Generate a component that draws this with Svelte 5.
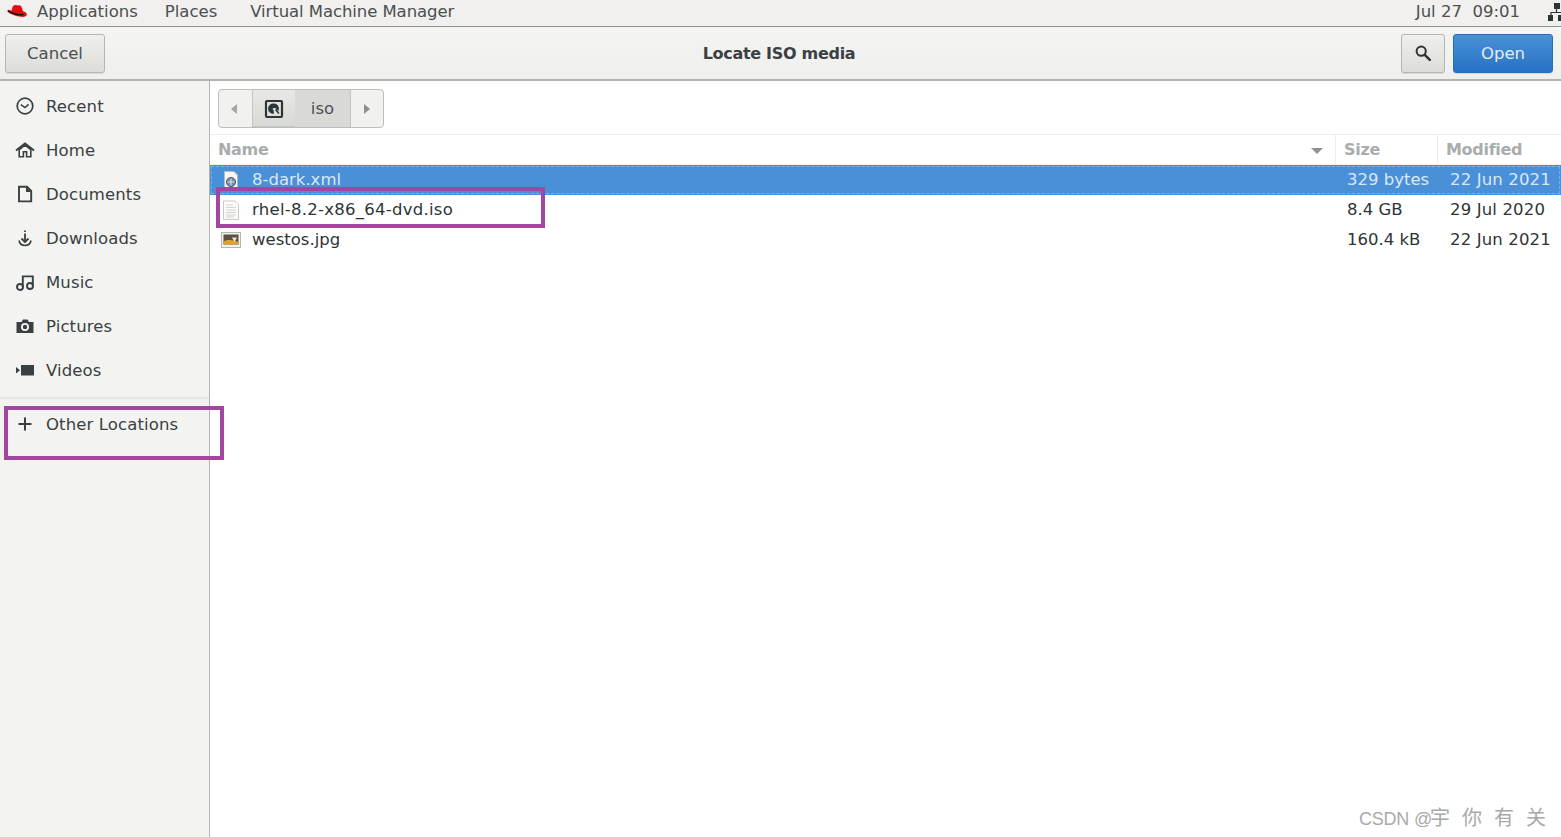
<script lang="ts">
  const places = [
    { name: "Recent", icon: "recent" },
    { name: "Home", icon: "home" },
    { name: "Documents", icon: "doc" },
    { name: "Downloads", icon: "down" },
    { name: "Music", icon: "music" },
    { name: "Pictures", icon: "camera" },
    { name: "Videos", icon: "video" },
  ];

  const files = [
    { name: "8-dark.xml", size: "329 bytes", date: "22 Jun 2021", icon: "xml", selected: true },
    { name: "rhel-8.2-x86_64-dvd.iso", size: "8.4 GB", date: "29 Jul 2020", icon: "text", selected: false },
    { name: "westos.jpg", size: "160.4 kB", date: "22 Jun 2021", icon: "image", selected: false },
  ];
</script>

<div class="screen">
  <div class="topbar">
    <svg class="hat" width="22" height="16" viewBox="1 1 20 14.5">
      <path d="M7 3.5C8 1.5 10.5 1.5 12 2.3 13.5 1.7 15 2.3 15.5 4.5L16.5 7.5C18.5 8 20 9 20 10.6 20 12.2 17.5 13 14.5 12.6 10.5 12.2 5 10 3 8.4 1.8 7.4 2 6.4 3.3 6.3L6 7Z" fill="#e01010" />
      <path d="M3 7.2C6 9.4 12 11 17 10.6" fill="none" stroke="#1a1010" stroke-width="1.4" />
    </svg>
    <span class="menu first">Applications</span>
    <span class="menu places">Places</span>
    <span class="menu vmm">Virtual Machine Manager</span>
    <span class="clock">Jul 27&nbsp; 09:01</span>
    <svg class="net" width="14" height="20" viewBox="0 0 14 20">
      <path d="M7 2h6v6H7zM1 14h5v6H1zM11 14h3v6h-3z" fill="#2e3436" />
      <path d="M9.5 8v3M4 14v-2.5h10" fill="none" stroke="#2e3436" stroke-width="1.2" />
    </svg>
  </div>

  <div class="header">
    <button class="btn cancel">Cancel</button>
    <div class="title">Locate ISO media</div>
    <button class="btn search" aria-label="Search">
      <svg width="18" height="18" viewBox="0 0 18 18">
        <circle cx="7.2" cy="7.2" r="4.6" fill="none" stroke="#2e3436" stroke-width="2" />
        <path d="M10.8 10.8l5 5" stroke="#2e3436" stroke-width="2.6" stroke-linecap="round" />
      </svg>
    </button>
    <button class="btn open">Open</button>
  </div>

  <div class="body">
    <aside class="sidebar">
      {#each places as p}
        <div class="place">
          <svg class="ico" width="20" height="20" viewBox="0 0 20 20">
            {#if p.icon === "recent"}
              <circle cx="10" cy="10" r="7.8" fill="none" stroke="#3a3f41" stroke-width="1.7" />
              <path d="M5.8 8.6l4.2 3 3.6-3.2" fill="none" stroke="#3a3f41" stroke-width="1.5" />
            {:else if p.icon === "home"}
              <path d="M1 10.5L10 3.4 19 10.5" fill="none" stroke="#3a3f41" stroke-width="2" />
              <path d="M4.2 9.5V16.8H8.4V11.8H11.6V16.8H15.8V9.5L10 5.2Z" fill="none" stroke="#3a3f41" stroke-width="1.6" />
            {:else if p.icon === "doc"}
              <path d="M4 2.8H12L16.2 7V17.4H4Z" fill="none" stroke="#3a3f41" stroke-width="1.9" />
              <path d="M11 2.8V8H16.2" fill="#3a3f41" />
            {:else if p.icon === "down"}
              <path d="M10 2.5V4M10 5.5V13" stroke="#3a3f41" stroke-width="1.8" fill="none" />
              <path d="M6.5 10.5L10 14 13.5 10.5" stroke="#3a3f41" stroke-width="1.8" fill="none" />
              <path d="M4 12.5C4.5 15.5 7 17.5 10 17.5S15.5 15.5 16 12.5" stroke="#3a3f41" stroke-width="1.6" fill="none" />
            {:else if p.icon === "music"}
              <circle cx="5" cy="15" r="3" fill="none" stroke="#3a3f41" stroke-width="1.9" />
              <circle cx="15" cy="14" r="3" fill="none" stroke="#3a3f41" stroke-width="1.9" />
              <path d="M7.8 15V4.4H17.8V14" fill="none" stroke="#3a3f41" stroke-width="1.9" />
            {:else if p.icon === "camera"}
              <path d="M1.5 6H6.5L8 3.6H12.5L14 6H18.5V17H1.5Z" fill="#3a3f41" />
              <circle cx="10" cy="11" r="4" fill="#f3f3f1" />
              <circle cx="10" cy="11" r="2.2" fill="#3a3f41" />
            {:else}
              <path d="M6 5H19V15.5H6Z" fill="#3a3f41" />
              <path d="M1 7L5 10.2 1 13.5Z" fill="#3a3f41" />
            {/if}
          </svg>
          <span>{p.name}</span>
        </div>
      {/each}
      <div class="sep"></div>
      <div class="place other">
        <svg class="ico" width="20" height="20" viewBox="0 0 20 20">
          <path d="M10 3.5V16.5M3.5 10H16.5" stroke="#3a3f41" stroke-width="2" fill="none" />
        </svg>
        <span>Other Locations</span>
      </div>
    </aside>

    <main class="content">
      <div class="pathwrap">
        <div class="pathbar">
          <div class="seg arrow back">
            <svg width="8" height="12" viewBox="0 0 8 12"><path d="M7 1V11L1 6Z" fill="#a3a7a8" /></svg>
          </div>
          <div class="seg disk">
            <svg width="20" height="20" viewBox="0 0 20 20">
              <rect x="2" y="2" width="16" height="16" rx="1" fill="none" stroke="#2e3436" stroke-width="2.2" />
              <path d="M10 4.5A5.2 5.2 0 1 0 10 14.8L9.6 11.3 8.3 9.8 11 8.8 14.2 12.3A5.2 5.2 0 0 0 10 4.5Z" fill="#2e3436" />
              <path d="M11.5 10.5l3.4 4" stroke="#2e3436" stroke-width="1.6" />
            </svg>
          </div>
          <div class="seg iso">iso</div>
          <div class="seg arrow forward">
            <svg width="8" height="12" viewBox="0 0 8 12"><path d="M1 1V11L7 6Z" fill="#8d9192" /></svg>
          </div>
        </div>
      </div>

      <div class="table-head">
        <div class="th name">Name
          <svg class="sort" width="12" height="6" viewBox="0 0 12 6"><path d="M0 0H12L6 6Z" fill="#8f9394" /></svg>
        </div>
        <div class="th size">Size</div>
        <div class="th modified">Modified</div>
      </div>

      {#each files as f}
        <div class="row" class:selected={f.selected}>
          <div class="cell name">
            <svg class="fileicon" width="20" height="20" viewBox="0 0 20 20">
              {#if f.icon === "xml"}
                <path d="M3.5 1.5H13L16.5 5V18.5H3.5Z" fill="#f4f5f5" stroke="#b9bcbc" />
                <circle cx="10" cy="12" r="4.6" fill="#6f8daa" stroke="#445" stroke-width="0.8" />
                <path d="M6.5 12H13.5M10 8.5V15.5" stroke="#dfe6ec" stroke-width="1" />
              {:else if f.icon === "text"}
                <path d="M2.5 1H14L17.5 4.5V19.5H2.5Z" fill="#fbfbfa" stroke="#c9c9c6" />
                <path d="M5 5H12M5 7.5H15M5 10H15M5 12.5H15M5 15H15M5 17H13" stroke="#d2d2cf" stroke-width="1" />
              {:else}
                <rect x="0.5" y="2.5" width="19" height="15" fill="#f1f1ef" stroke="#b5b5b2" />
                <rect x="2.5" y="4.5" width="15" height="10" fill="#5c5142" />
                <path d="M2.5 11.5C7 9 12 10 17.5 12V14.5H2.5Z" fill="#e0a32e" />
                <path d="M11 7.5L16 7.5 13.5 12Z" fill="#eee4cd" />
              {/if}
            </svg>
            <span class:long={f.icon === "text"}>{f.name}</span>
          </div>
          <div class="cell size">{f.size}</div>
          <div class="cell modified">{f.date}</div>
        </div>
      {/each}
    </main>
  </div>

  <div class="mark mark-file"></div>
  <div class="mark mark-other"></div>
  <div class="watermark">CSDN @<span class="cjk">宇你有关</span></div>
</div>

<style>
  :global(body) {
    margin: 0;
    background: #fff;
  }

  .screen {
    position: relative;
    width: 1561px;
    height: 837px;
    overflow: hidden;
    display: flex;
    flex-direction: column;
    font-family: "DejaVu Sans", "Noto Sans CJK SC", sans-serif;
    font-size: 16.5px;
    color: #2e3436;
  }

  .topbar {
    flex: none;
    display: flex;
    align-items: center;
    padding: 0 0 4px 6px;
    background: #f1f0ee;
    border-bottom: 1px solid #8f8f8b;
    height: 22px;
    color: #4a4f50;
  }

  .hat {
    flex: none;
    margin-top: 1px;
  }

  .menu {
    white-space: nowrap;
  }

  .menu.first {
    margin-left: 9px;
  }

  .menu.places {
    margin-left: 27px;
  }

  .menu.vmm {
    margin-left: 33px;
    letter-spacing: -0.08px;
  }

  .clock {
    margin-left: auto;
    margin-right: 27px;
    white-space: nowrap;
  }

  .net {
    flex: none;
  }

  .header {
    height: 52px;
    flex: none;
    display: flex;
    align-items: center;
    padding: 0 8px 0 5px;
    background: linear-gradient(#f4f4f3, #efefed);
    border-bottom: 2px solid #b3b3af;
    border-top-right-radius: 6px;
  }

  .btn {
    height: 39px;
    box-sizing: border-box;
    border: 1px solid #b6b6b3;
    border-radius: 3px;
    background: linear-gradient(#efefed, #dcdcd9);
    font: inherit;
    color: #4b5052;
    padding: 0;
    display: flex;
    align-items: center;
    justify-content: center;
    box-shadow: 0 1px 0 #d8d8d5;
  }

  .cancel {
    width: 100px;
  }

  .title {
    position: absolute;
    left: 0;
    right: 3px;
    text-align: center;
    font-weight: 700;
    font-size: 16px;
    letter-spacing: -0.3px;
    color: #3b4042;
    pointer-events: none;
  }

  .search {
    width: 44px;
    margin-left: auto;
  }

  .open {
    width: 100px;
    margin-left: 8px;
    background: linear-gradient(#4a90d9, #2672c4);
    border-color: #2a6db5;
    color: #e3edf8;
  }

  .body {
    flex: 1;
    display: flex;
    min-height: 0;
  }

  .sidebar {
    width: 209px;
    flex: none;
    background: #f3f3f1;
    border-right: 1px solid #b4b4b0;
    padding-top: 3px;
  }

  .place {
    height: 44px;
    display: flex;
    align-items: center;
    padding-left: 15px;
    gap: 11px;
    color: #3a3f41;
    letter-spacing: 0.12px;
  }

  .sep {
    height: 2px;
    background: #e6e6e3;
    margin-top: 5px;
  }

  .place.other {
    margin-top: 3px;
  }

  .ico {
    flex: none;
  }

  .content {
    flex: 1;
    min-width: 0;
    background: #fff;
  }

  .pathwrap {
    height: 54px;
    box-sizing: border-box;
    padding: 8px 0 0 8px;
    border-bottom: 1px solid #ececea;
  }

  .pathbar {
    display: inline-flex;
    height: 39px;
    box-sizing: border-box;
    border: 1px solid #bdbdba;
    border-radius: 4px;
    overflow: hidden;
    background: #f1f1f0;
  }

  .seg {
    display: flex;
    align-items: center;
    justify-content: center;
    height: 100%;
  }

  .arrow {
    width: 33px;
    box-sizing: border-box;
  }

  .arrow.back {
    padding-right: 4px;
  }

  .arrow.forward {
    width: 32px;
  }

  .disk {
    width: 43px;
    background: linear-gradient(#e8e8e6, #d8d8d5);
    border-left: 1px solid #c4c4c1;
    box-shadow: inset 0 -1px 0 #c4c4c1;
    box-sizing: border-box;
  }

  .iso {
    width: 56px;
    background: #d9d9d6;
    border-right: 1px solid #c4c4c1;
    box-sizing: border-box;
    color: #4b5052;
  }

  .table-head {
    height: 30px;
    display: flex;
    font-weight: 700;
    font-size: 16px;
    letter-spacing: -0.3px;
    color: #a9acad;
    border-bottom: 1px solid #f0f0ee;
    box-sizing: border-box;
  }

  .th {
    display: flex;
    align-items: center;
    box-sizing: border-box;
  }

  .th.name {
    flex: 1;
    padding-left: 8px;
    position: relative;
  }

  .sort {
    position: absolute;
    right: 12px;
    top: 13px;
  }

  .th.size {
    width: 102px;
    padding-left: 8px;
    border-left: 1px solid #ececea;
  }

  .th.modified {
    width: 124px;
    padding-left: 8px;
    border-left: 1px solid #ececea;
  }

  .row {
    height: 30px;
    display: flex;
    align-items: center;
    color: #2e3436;
    line-height: 28px;
    padding-bottom: 1px;
    box-sizing: border-box;
  }

  .row.selected {
    background: #4a90d9;
    color: #dbe8f6;
    outline: 1px dashed #7fadde;
    outline-offset: -2px;
  }

  .cell.name {
    flex: 1;
    display: flex;
    align-items: center;
    padding-left: 11px;
    gap: 11px;
  }

  .long {
    letter-spacing: 0.26px;
  }

  .fileicon {
    flex: none;
    margin-top: 1px;
  }

  .cell.size {
    width: 102px;
    padding-left: 12px;
    box-sizing: border-box;
    white-space: nowrap;
  }

  .cell.modified {
    width: 124px;
    padding-left: 13px;
    box-sizing: border-box;
    white-space: nowrap;
    letter-spacing: 0.15px;
  }

  .mark {
    position: absolute;
    border: 4px solid #a2479f;
    box-sizing: border-box;
    pointer-events: none;
  }

  .mark-file {
    left: 216px;
    top: 187px;
    width: 329px;
    height: 41px;
  }

  .mark-other {
    left: 4px;
    top: 406px;
    width: 220px;
    height: 54px;
  }

  .watermark {
    position: absolute;
    right: 3px;
    bottom: 6px;
    font-size: 18px;
    letter-spacing: -0.2px;
    color: #a9a9a9;
    white-space: nowrap;
    font-family: "Liberation Sans", "Noto Sans CJK SC", sans-serif;
  }

  .cjk {
    font-size: 20px;
    letter-spacing: 12px;
    margin-left: -2px;
  }
</style>
